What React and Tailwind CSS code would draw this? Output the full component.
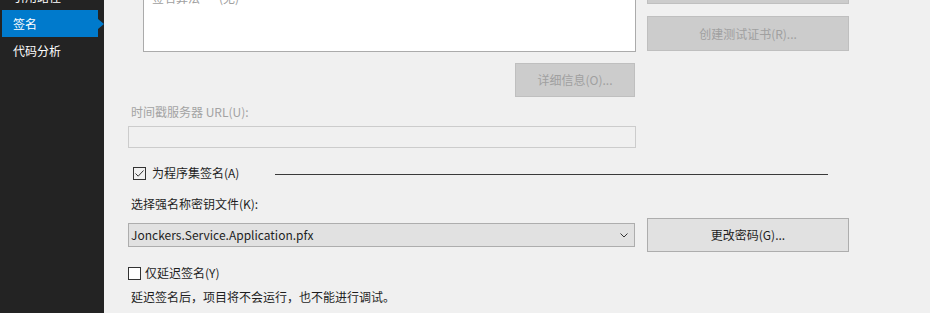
export default function App() {
  const font = "font-['Noto_Sans_CJK_SC','Noto_Sans',sans-serif]";
  return (
    <div className={`flex w-[930px] h-[313px] overflow-hidden bg-[#f0f0f0] text-[12px] leading-[16px] text-[#1e1e1e] ${font}`}>
      {/* left nav */}
      <div className="w-[104px] shrink-0 bg-[#232323] text-white">
        <div className="mt-[-17px] flex flex-col">
          <div className="h-[27px] flex items-center pl-[13px]">引用路径</div>
          <div className="relative h-[27px] ml-[2px] mr-[6px] flex items-center pl-[11px] bg-[#007acc]">
            签名
            <svg className="absolute right-[-6px] top-[9px]" width="6" height="10" viewBox="0 0 6 10">
              <path d="M0 0 L6 5 L0 10 Z" fill="#007acc" />
            </svg>
          </div>
          <div className="h-[27px] flex items-center pl-[13px]">代码分析</div>
        </div>
      </div>

      {/* content */}
      <div className="flex-1 pl-[24px]">
        <div className="flex mt-[-38px]">
          <div className="w-[508px] flex flex-col">
            <div className="ml-[15px] w-[493px] h-[90px] bg-white border border-[#ababab] pl-[8px] pt-[27px] text-[#a0a0a0]">
              <div className="flex">
                <span className="w-[67px]">签名算法</span>
                <span>(无)</span>
              </div>
            </div>
            <div className="flex justify-end mt-[11px] pr-[1px]">
              <button className="w-[120px] h-[34px] bg-[#cccccc] border border-[#bfbfbf] text-[#a0a0a0]">
                详细信息(O)...
              </button>
            </div>
          </div>
          <div className="ml-[11px] flex flex-col">
            <button className="mt-[8px] w-[202px] h-[34px] bg-[#cccccc] border border-[#bfbfbf] text-[#a0a0a0]">
              导入证书(I)...
            </button>
            <button className="mt-[12px] w-[202px] h-[35px] bg-[#cccccc] border border-[#bfbfbf] text-[#a0a0a0]">
              创建测试证书(R)...
            </button>
          </div>
        </div>

        <div className="mt-[7px] pl-[3px] text-[#a3a3a3]">时间戳服务器 URL(U):</div>
        <div className="mt-[6px] w-[508px] h-[22px] border border-[#cccccc] bg-[#f0f0f0]"></div>

        <div className="mt-[17px] pl-[5px] h-[16px] flex items-center">
          <div className="w-[13px] h-[13px] border border-[#333333] bg-[#f0f0f0] flex items-center justify-center">
            <svg width="11" height="11" viewBox="0 0 11 11">
              <path d="M1.5 5.5 L4.2 8.2 L9.5 2.5" fill="none" stroke="#333333" strokeWidth="1" />
            </svg>
          </div>
          <span className="ml-[6px]">为程序集签名(A)</span>
          <div className="ml-[36px] w-[553px] h-px bg-[#3a3a3a] mt-[2px]"></div>
        </div>

        <div className="mt-[15px] pl-[3px]">选择强名称密钥文件(K):</div>

        <div className="mt-[6px] flex items-center">
          <div className="w-[507px] h-[24px] bg-[#e1e1e1] border border-[#adadad] flex items-center justify-between pl-[2px] pr-[6px]">
            <span>Jonckers.Service.Application.pfx</span>
            <svg width="8" height="5" viewBox="0 0 8 5">
              <path d="M0.5 0.5 L4 4 L7.5 0.5" fill="none" stroke="#333333" strokeWidth="1" />
            </svg>
          </div>
          <button className="ml-[12px] w-[202px] h-[34px] bg-[#e1e1e1] border border-[#adadad] text-[#1e1e1e]">
            更改密码(G)...
          </button>
        </div>

        <div className="mt-[13px] h-[16px] flex items-center">
          <div className="w-[13px] h-[13px] border border-[#333333] bg-white"></div>
          <span className="ml-[4px]">仅延迟签名(Y)</span>
        </div>

        <div className="mt-[8px] pl-[3px]">延迟签名后，项目将不会运行，也不能进行调试。</div>
      </div>
    </div>
  );
}
